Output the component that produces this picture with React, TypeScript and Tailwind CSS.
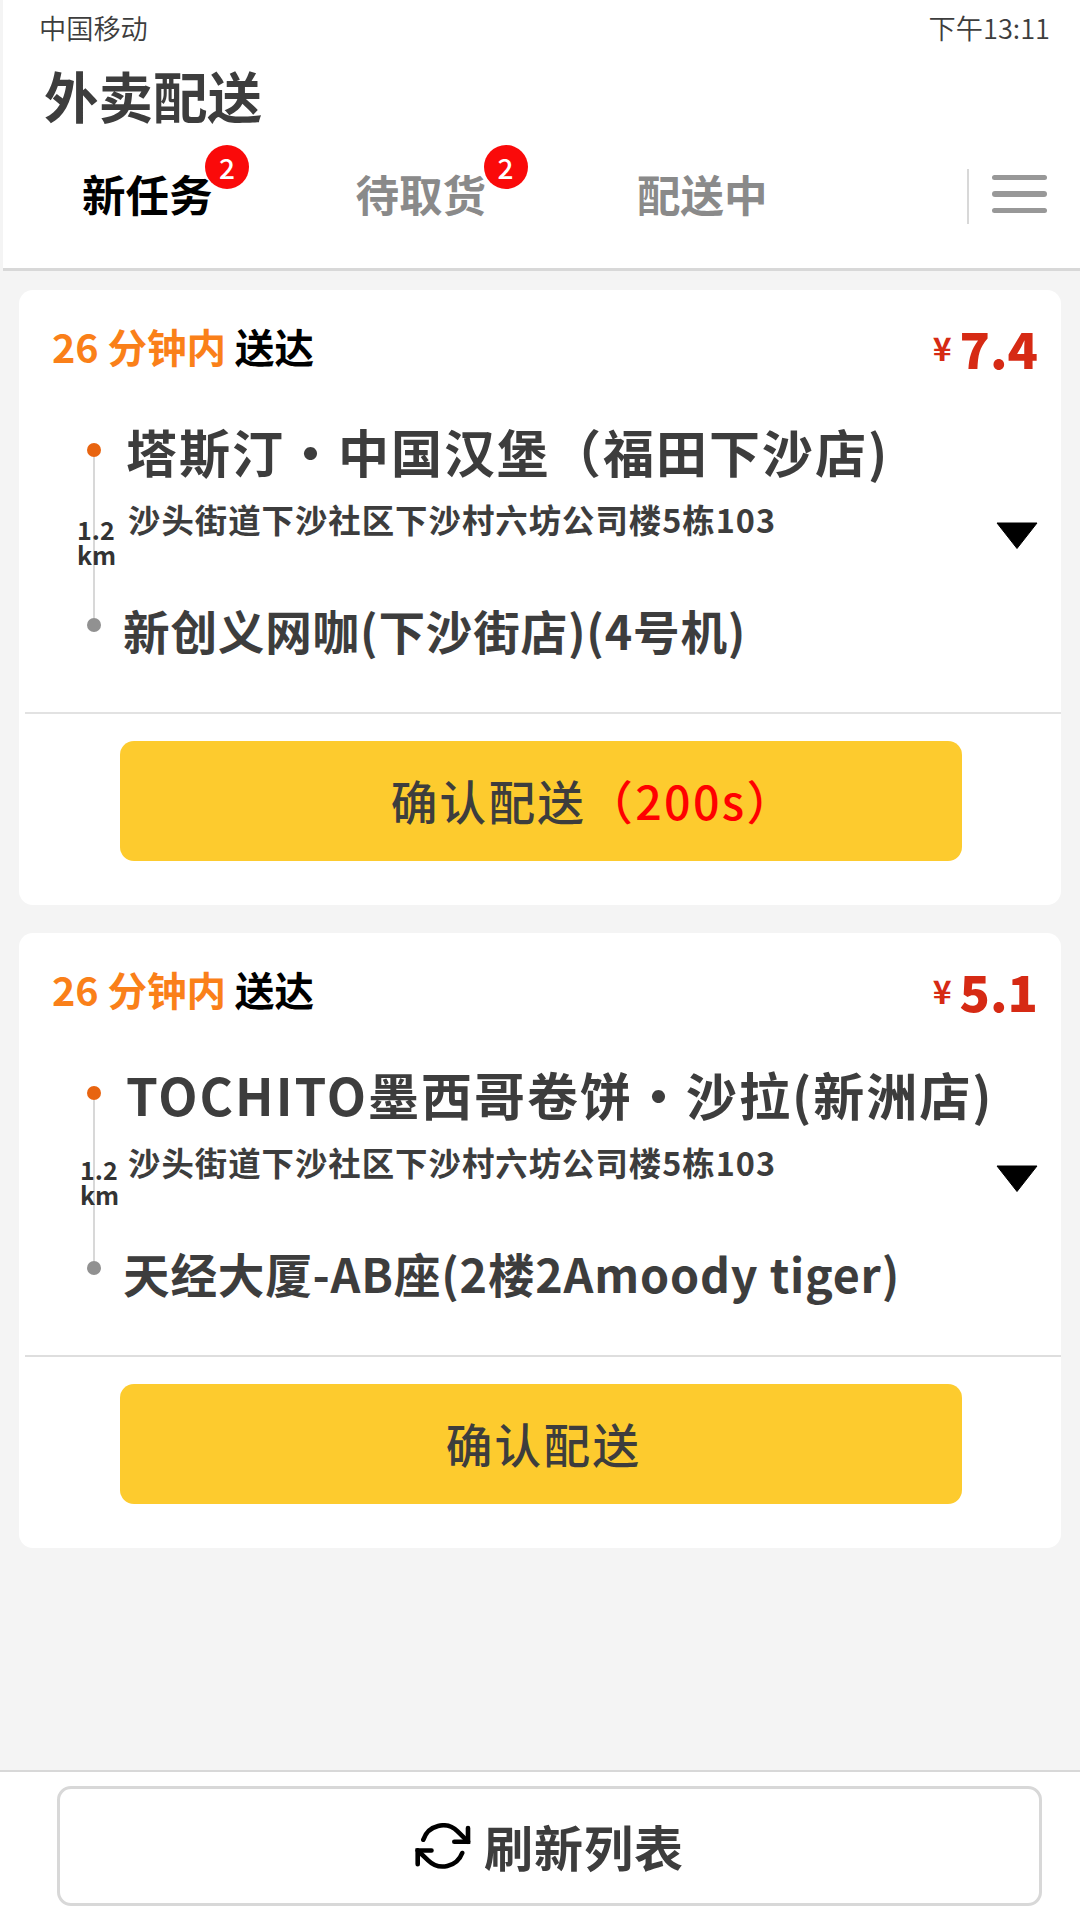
import { useState } from "react";
import clsx from "clsx";

interface Order {
  id: number;
  minutes: number;
  price: string;
  shop: string;
  address: string;
  customer: string;
  distance: string;
  countdown?: number;
  distanceClass: string;
  dividerClass: string;
}

const tabs = [
  { label: "新任务", count: 2, className: "ml-[79px]", badgeClass: "left-[123px]" },
  { label: "待取货", count: 2, className: "ml-[143px]", badgeClass: "left-[128px]" },
  { label: "配送中", count: 0, className: "ml-[151px]", badgeClass: "" },
];

const orders: Order[] = [
  {
    id: 1,
    minutes: 26,
    price: "7.4",
    shop: "塔斯汀・中国汉堡（福田下沙店)",
    address: "沙头街道下沙社区下沙村六坊公司楼5栋103",
    customer: "新创义网咖(下沙街店)(4号机)",
    distance: "1.2",
    countdown: 200,
    distanceClass: "left-[-10px] top-[74px]",
    dividerClass: "h-[2px] bg-[#e2e2e2]",
  },
  {
    id: 2,
    minutes: 26,
    price: "5.1",
    shop: "TOCHITO墨西哥卷饼・沙拉(新洲店)",
    address: "沙头街道下沙社区下沙村六坊公司楼5栋103",
    customer: "天经大厦-AB座(2楼2Amoody tiger)",
    distance: "1.2",
    distanceClass: "left-[-7px] top-[71px]",
    dividerClass: "h-[2px] bg-[#dedede]",
  },
];

function RefreshIcon() {
  return (
    <svg
      width="56"
      height="46"
      viewBox="0 0 56 46"
      fill="none"
      stroke="#000"
      strokeWidth="4.6"
      strokeLinecap="round"
      strokeLinejoin="round"
    >
      <path d="M8.3 16.7A20.7 20.7 0 0 1 42.6 8.4L53 18.7" />
      <path d="M53 5V18.7H39.3" strokeLinejoin="miter" />
      <path d="M47.2 30A20.7 20.7 0 0 1 13.4 37.6L2.7 27.5" />
      <path d="M2.7 41.3V27.5H16.5" strokeLinejoin="miter" />
    </svg>
  );
}

function OrderCard({ order }: { order: Order }) {
  return (
    <div className="h-[615px] rounded-[14px] bg-white">
      {/* 时间与价格 */}
      <div className="flex h-[110px] items-center justify-between pl-[33px] pr-[23px]">
        <div className="whitespace-pre pt-[2px] text-[39.5px] font-bold leading-[48px] text-black">
          <span className="text-[#fa8019]">{order.minutes} 分钟内</span> 送达
        </div>
        <div className="flex items-center gap-[8px] pt-1 leading-[50px] text-[#d62a14]">
          <span className="text-[32px] font-bold">¥</span>
          <span className="text-[50px] font-black">{order.price}</span>
        </div>
      </div>

      {/* 路线 */}
      <div className="flex h-[312px] pl-[68px]">
        <div className="relative mt-[43px] flex h-[189px] w-[14px] flex-col items-center">
          <span className="size-[14px] rounded-full bg-[#e86410]" />
          <span className="w-[2px] flex-1 bg-[#d8d8d8]" />
          <span className="size-[14px] rounded-full bg-[#919191]" />
          <div
            className={clsx(
              "absolute text-[25px] font-bold leading-[25px] text-[#333]",
              order.distanceClass
            )}
          >
            <p>{order.distance}</p>
            <p>km</p>
          </div>
        </div>
        <div className="ml-[22px] flex-1 whitespace-nowrap font-bold text-[#3d3d3d]">
          <h2 className="mt-[20px] pl-[3px] text-[51px] leading-[62px] tracking-[2px]">
            {order.shop}
          </h2>
          <p className="mt-[17px] pl-[5px] text-[32.4px] leading-[40px] tracking-[1px]">
            {order.address}
          </p>
          <p className="mt-[61px] text-[46.6px] leading-[60px] tracking-[0.8px]">
            {order.customer}
          </p>
        </div>
        <svg
          className="mr-[23px] mt-[122px] shrink-0"
          width="42"
          height="28"
          viewBox="0 0 42 28"
        >
          <path
            d="M1 1H41L21 26.5Z"
            stroke="#000"
            strokeLinejoin="round"
          />
        </svg>
      </div>

      <div className={clsx("ml-[6px]", order.dividerClass)} />

      <button
        className={clsx(
          "ml-[101px] mt-[27px] flex h-[120px] w-[842px] items-center justify-center rounded-[14px] bg-[#fdcb2e] pb-[2px] text-[46.6px] font-medium tracking-[2.3px] text-[#3d3d3d]",
          order.countdown ? "pl-[104px]" : "pl-[5px]"
        )}
      >
        确认配送
        {order.countdown && (
          <span className="text-[#ff0000]">（{order.countdown}s）</span>
        )}
      </button>
    </div>
  );
}

export default function App() {
  const [activeTab, setActiveTab] = useState(0);

  return (
    <div className="flex h-[1920px] w-[1080px] flex-col overflow-hidden bg-[#f4f4f4] font-['Noto_Sans_CJK_SC',sans-serif]">
      <header className="ml-[3px] h-[271px] shrink-0 border-b-[3px] border-[#d8d8d8] bg-white">
        <div className="flex h-[54px] items-center justify-between pl-[36px] pr-[30px] text-[27.2px] font-[350] text-[#3d3d3d]">
          <span>中国移动</span>
          <span>下午13:11</span>
        </div>
        <h1 className="pl-[41px] text-[54.5px] font-bold leading-[82px] text-[#3d3d3d]">
          外卖配送
        </h1>

        <div className="flex h-[116px] items-center">
          {tabs.map((tab, i) => (
            <button
              key={tab.label}
              onClick={() => setActiveTab(i)}
              className={clsx(
                "relative text-[43.5px] font-bold leading-[50px]",
                tab.className,
                i === activeTab ? "text-black" : "text-[#8a8a8a]"
              )}
            >
              {tab.label}
              {tab.count > 0 && (
                <span
                  className={clsx(
                    "absolute -top-[24px] flex size-[44px] items-center justify-center rounded-full bg-[#fa0a0a] text-[28px] font-medium text-white",
                    tab.badgeClass
                  )}
                >
                  {tab.count}
                </span>
              )}
            </button>
          ))}
          <div className="ml-auto mr-[33px] flex items-center gap-[23px]">
            <span className="mt-[5px] h-[55px] w-[2px] bg-[#d8d8d8]" />
            <div className="flex flex-col gap-[11px]">
              <span className="h-[5.5px] w-[55px] rounded-full bg-[#989898]" />
              <span className="h-[5.5px] w-[55px] rounded-full bg-[#989898]" />
              <span className="h-[5.5px] w-[55px] rounded-full bg-[#989898]" />
            </div>
          </div>
        </div>
      </header>

      <main className="flex flex-1 flex-col gap-[27.5px] pl-[19px] pr-[19px] pt-[19px]">
        {orders.map((order) => (
          <OrderCard key={order.id} order={order} />
        ))}
      </main>

      <footer className="h-[150px] shrink-0 border-t-2 border-[#d8d8d8] bg-white pl-[57px] pr-[38px] pt-[14px]">
        <button className="flex h-[120px] w-full items-center justify-center gap-[13px] rounded-[14px] border-[3px] border-[#d8d8d8] text-[49px] font-bold tracking-[1px] text-[#3d3d3d]">
          <RefreshIcon />
          刷新列表
        </button>
      </footer>
    </div>
  );
}
